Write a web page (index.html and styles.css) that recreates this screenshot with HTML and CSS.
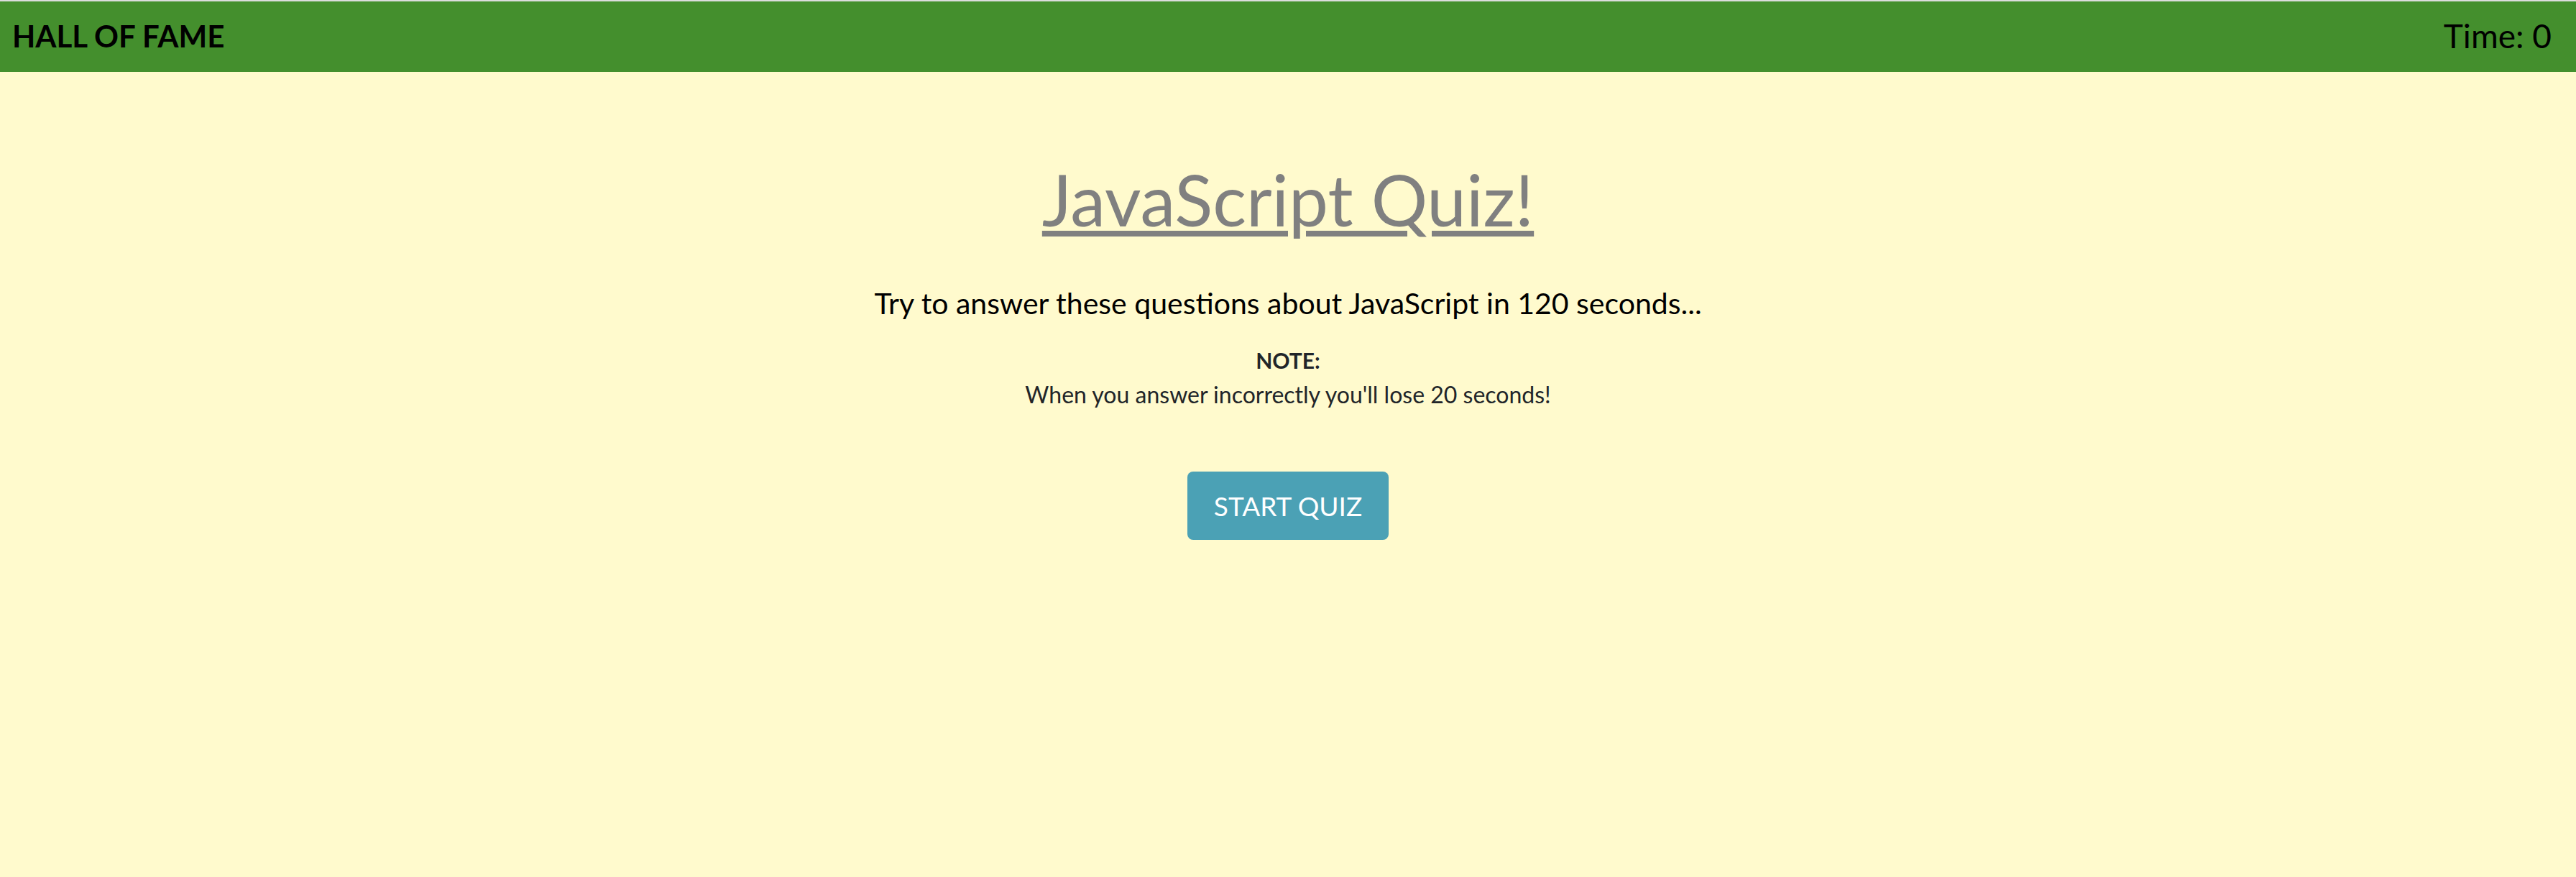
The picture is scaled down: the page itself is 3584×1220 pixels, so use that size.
FILE: index.html
```html
<!DOCTYPE html>
<html lang="en">
<head>
<meta charset="utf-8">
<title>JavaScript Quiz</title>
<link rel="stylesheet" href="styles.css">
</head>
<body>
<header class="topbar">
  <a class="hof" href="#">HALL OF FAME</a>
  <span class="timer">Time: 0</span>
</header>
<main class="intro">
  <h1 class="title">JavaScript Quiz!</h1>
  <p class="lead">Try to answer these questions about JavaScript in 120 seconds...</p>
  <div class="note">
    <strong class="note-label">NOTE:</strong>
    <span class="note-text">When you answer incorrectly you'll lose 20 seconds!</span>
  </div>
  <button class="start">START QUIZ</button>
</main>
</body>
</html>
```
FILE: styles.css
```css
html, body {
  margin: 0;
  padding: 0;
}
body {
  background: #fffacd;
  font-family: "Lato", sans-serif;
  color: #212529;
  min-height: 1220px;
}
.topbar {
  border-top: 2px solid #dcdcdc;
  background: #448f2d;
  height: 98px;
  box-sizing: border-box;
  height: 100px;
  display: flex;
  align-items: center;
  justify-content: space-between;
  padding: 0 34px 3px 17px;
}
.hof {
  color: #000;
  font-weight: bold;
  font-size: 42px;
  text-decoration: none;
}
.timer {
  color: #000;
  font-size: 46px;
}
.intro {
  display: flex;
  flex-direction: column;
  align-items: center;
  text-align: center;
}
.title {
  margin: 119px 0 0;
  font-size: 98px;
  font-weight: normal;
  color: #808080;
  text-decoration: underline;
  text-decoration-thickness: 8px;
  text-underline-offset: 6px;
  line-height: 1.2;
}
.lead {
  margin: 54px 0 0;
  font-size: 41px;
  line-height: 1.5;
  color: #000;
}
.note {
  margin-top: 25px;
  display: flex;
  flex-direction: column;
  align-items: center;
  line-height: 48px;
}
.note-label {
  font-size: 30px;
  font-weight: bold;
}
.note-text {
  font-size: 32px;
}
.start {
  margin-top: 83px;
  width: 280px;
  height: 95px;
  border: none;
  border-radius: 8px;
  background: #4ba1b5;
  color: #fff;
  font-family: inherit;
  font-size: 37px;
  padding: 0;
}
```
